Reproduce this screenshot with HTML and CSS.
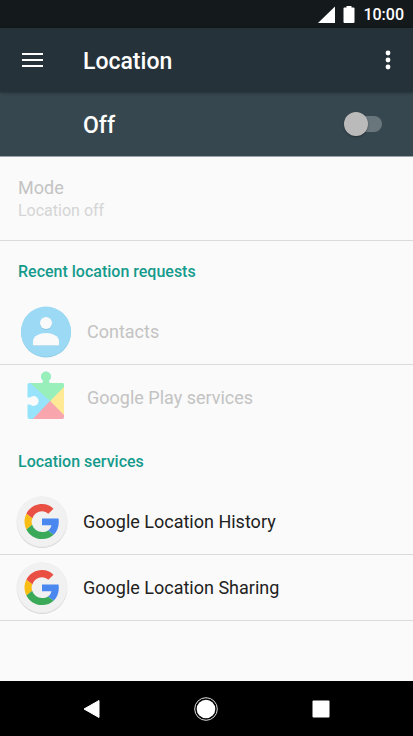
FILE: index.html
```html
<!DOCTYPE html>
<html lang="en">
<head>
<meta charset="utf-8">
<meta name="viewport" content="width=device-width, initial-scale=1">
<title>Location</title>
<link rel="stylesheet" href="styles.css">
</head>
<body>
<svg class="defs" aria-hidden="true">
  <symbol id="google" viewBox="0 0 54 54">
    <circle cx="27" cy="28" r="25" fill="#d0d0d0"/>
    <circle cx="27" cy="27" r="25.500" fill="#e6e6e6"/>
    <circle cx="27" cy="26.500" r="25" fill="#f1f1f1"/>
    <g transform="translate(9.500 9) scale(.73)">
      <path fill="#e94f42" d="M24 10c3.540 0 6.200 1.220 8.600 3.500l7.100-6.900C35.900 2.380 30.470 0 24 0 14.620 0 6.510 5.380 2.560 13.220l8.400 6.500C12.800 14 17.740 10 24 10z"/>
      <path fill="#4a87ee" d="M46.980 24.550c0-1.570-.15-3.090-.38-4.550H24v9.020h12.940c-.58 2.960-2.260 5.480-4.780 7.180l7.730 6c4.510-4.180 7.090-10.360 7.090-17.650z"/>
      <path fill="#fabd13" d="M10.530 28.590c-.48-1.450-.76-2.990-.76-4.590s.27-3.140.76-4.590l-7.980-6.190C.92 16.460 0 20.120 0 24c0 3.880.92 7.540 2.560 10.780l7.970-6.190z"/>
      <path fill="#3aa958" d="M24 48c6.480 0 11.930-2.130 15.890-5.810l-7.730-6c-2.150 1.450-4.920 2.300-8.160 2.300-6.260 0-11.570-4.220-13.470-9.910l-7.980 6.190C6.510 42.620 14.620 48 24 48z"/>
    </g>
  </symbol>
</svg>
<div class="screen">
  <div class="status">
    <svg width="18" height="18" viewBox="0 0 18 18" aria-hidden="true"><path d="M1 17 18 .5V17z" fill="#fff"/></svg>
    <svg width="12" height="18" viewBox="0 0 12 18" aria-hidden="true"><path d="M3.500 0h5v1.500h2q1 0 1 1V16q0 1-1 1h-9q-1 0-1-1V2.500q0-1 1-1h2z" fill="#fff"/></svg>
    <span class="clock">10:00</span>
  </div>
  <header class="appbar">
    <button class="icon-button" aria-label="Open menu">
      <svg width="22" height="16" viewBox="0 0 22 16"><path d="M0 2h21M0 8h21M0 14h21" stroke="#fff" stroke-width="2.200"/></svg>
    </button>
    <h1>Location</h1>
    <button class="icon-button more" aria-label="More options">
      <svg width="6" height="20" viewBox="0 0 6 20"><g fill="#fff"><circle cx="3" cy="3" r="2.400"/><circle cx="3" cy="10" r="2.400"/><circle cx="3" cy="17" r="2.400"/></g></svg>
    </button>
  </header>
  <div class="switchbar">
    <label for="location-switch">Off</label>
    <input class="switch" id="location-switch" type="checkbox" role="switch">
  </div>
  <main>
    <button class="mode" disabled>
      <span class="title">Mode</span>
      <span class="summary">Location off</span>
    </button>
    <section>
      <h2>Recent location requests</h2>
      <ul class="requests">
        <li><button class="row" disabled>
          <svg width="54" height="54" viewBox="0 0 54 54" aria-hidden="true">
            <circle cx="27" cy="27.500" r="25" fill="#8fcde8"/>
            <circle cx="27" cy="26.500" r="25" fill="#9bd9f5"/>
            <circle cx="27" cy="19" r="6" fill="#8dc9e3"/>
            <path d="M14 41v-3.500c0-5 7-8.500 13-8.500s13 3.500 13 8.500V41z" fill="#86c3df"/>
            <circle cx="27" cy="18" r="6" fill="#fafafa"/>
            <path d="M14 40v-4c0-5 7-8 13-8s13 3 13 8v4q0 .5-.5.500h-25q-.5 0-.5-.5z" fill="#fafafa"/>
          </svg>
          <span>Contacts</span>
        </button></li>
        <li><button class="row" disabled>
          <svg width="54" height="54" viewBox="0 0 54 54" aria-hidden="true">
            <clipPath id="puzzle"><path d="M10.500 12H22.500Q24 12 24 10.500V9.500A5 5 0 1 1 30 9.500V10.500Q30 12 31.500 12H43Q45 12 45 14V46Q45 48 43 48H10.500Q8.500 48 8.500 46V33.500H11A5 5 0 1 0 11 26.500H8.500V14Q8.500 12 10.500 12z"/></clipPath>
            <g clip-path="url(#puzzle)">
              <path fill="#97e3fb" d="M8 0h38v50H8z"/>
              <path fill="#ffe994" d="M46 14v32L31 30z"/>
              <path fill="#98efba" d="M9 10V0h37v15L31 30z"/>
              <path fill="#f9a5ae" d="M31 30 46 45v5H12z"/>
            </g>
          </svg>
          <span>Google Play services</span>
        </button></li>
      </ul>
    </section>
    <section>
      <h2>Location services</h2>
      <ul class="services">
        <li><button class="row"><svg width="54" height="54" aria-hidden="true"><use href="#google"/></svg><span>Google Location History</span></button></li>
        <li><button class="row"><svg width="54" height="54" aria-hidden="true"><use href="#google"/></svg><span>Google Location Sharing</span></button></li>
      </ul>
    </section>
  </main>
  <nav class="navbar" aria-label="System">
    <button aria-label="Back"><svg width="24" height="24" viewBox="0 0 24 24"><path d="M4 12 19 3.500v17z" fill="#fff" stroke="#fff" stroke-linejoin="round"/></svg></button>
    <button aria-label="Home"><svg width="24" height="24" viewBox="0 0 24 24"><circle cx="12" cy="12" r="9.300" fill="#fff"/><circle cx="12" cy="12" r="11.300" fill="none" stroke="#ddd"/></svg></button>
    <button aria-label="Overview"><svg width="24" height="24" viewBox="0 0 24 24"><rect x="3.500" y="3.500" width="17" height="17" rx="1" fill="#fff"/></svg></button>
  </nav>
</div>
</body>
</html>
```
FILE: styles.css
```css
* { box-sizing: border-box; }

body {
  margin: 0;
  background: #fafafa;
  color: #212121;
  font-family: Roboto, "Liberation Sans", sans-serif;
}

button {
  margin: 0;
  padding: 0;
  border: 0;
  background: none;
  color: inherit;
  font: inherit;
  text-align: left;
}

svg { display: block; flex: none; }
.defs { position: absolute; width: 0; height: 0; }

.screen {
  display: flex;
  flex-direction: column;
  min-height: 100vh;
}

.status {
  display: flex;
  align-items: center;
  justify-content: flex-end;
  gap: 8px;
  height: 28px;
  padding: 2px 9px 0 0;
  background: #14191c;
  color: #fff;
}
.clock { font-size: 16px; font-weight: 500; line-height: 26px; }

.appbar {
  position: relative;
  display: flex;
  align-items: center;
  height: 64px;
  padding: 0 15px 0 22px;
  background: #263239;
  color: #fff;
  box-shadow: 0 1px 3px rgba(0, 0, 0, .35);
}
.icon-button { display: flex; align-items: center; width: 61px; height: 48px; }
.icon-button.more { justify-content: center; width: 20px; }

h1 {
  flex: 1;
  margin: 0;
  padding-top: 4px;
  font-size: 23px;
  font-weight: 500;
  line-height: 32px;
}

.switchbar {
  display: flex;
  align-items: center;
  justify-content: space-between;
  height: 65px;
  padding: 0 31px 0 83px;
  border-bottom: 1px solid #9ba4a8;
  background: #37474f;
  color: #fff;
}
.switchbar label { padding-top: 4px; font-size: 23px; font-weight: 500; line-height: 32px; }

.switch {
  appearance: none;
  position: relative;
  display: flex;
  align-items: center;
  width: 38px;
  height: 24px;
  margin: 0;
}
.switch::before {
  content: "";
  position: absolute;
  inset: 4px 0 4px 4px;
  border-radius: 8px;
  background: #69767c;
}
.switch::after {
  content: "";
  position: relative;
  width: 24px;
  height: 24px;
  border-radius: 50%;
  background: #bababa;
  box-shadow: 0 1px 2px rgba(0, 0, 0, .35);
}
.switch:checked { justify-content: flex-end; }

main { flex: 1; }

.mode {
  display: flex;
  flex-direction: column;
  justify-content: center;
  width: 100%;
  height: 84px;
  padding: 1px 18px 0;
  border-bottom: 1px solid #dadada;
}
.title { color: #c3c3c3; font-size: 18px; line-height: 24px; }
.summary { color: #d5d5d5; font-size: 16px; line-height: 22px; }

h2 {
  margin: 0;
  padding: 21px 18px 17px;
  color: #159b8c;
  font-size: 16px;
  font-weight: 500;
  line-height: 20px;
}

ul { margin: 0; padding: 0; list-style: none; }
li { height: 66px; }

.row {
  display: flex;
  align-items: center;
  width: 100%;
  height: 65px;
  font-size: 18px;
  line-height: 24px;
}
.requests .row { gap: 14px; padding: 0 19px; }
.requests .row:disabled { color: #c3c3c3; }
.requests li:first-child,
.services li { border-bottom: 1px solid #dadada; }
.services .row { gap: 14px; padding: 0 15px; }

.navbar {
  display: grid;
  grid-template-columns: repeat(3, 1fr);
  height: 55px;
  padding: 0 35px;
  background: #000;
}
.navbar button { display: grid; place-items: center; }
```
